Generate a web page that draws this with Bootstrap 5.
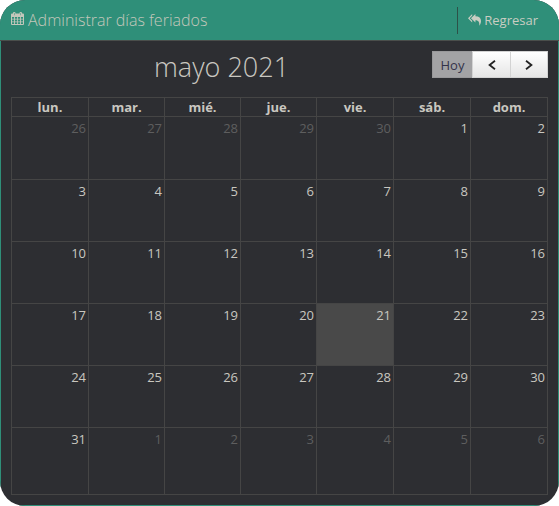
<!DOCTYPE html>
<html lang="es">
<head>
<meta charset="utf-8">
<meta name="viewport" content="width=device-width, initial-scale=1">
<title>Administrar días feriados</title>
<link href="https://cdn.jsdelivr.net/npm/bootstrap@5.3.0/dist/css/bootstrap.min.css" rel="stylesheet">
<style>
body{font-family:"Open Sans",sans-serif;font-size:13px;line-height:18px;color:#c9c7c0;background:#fff}
.frame{border-radius:25px}
.panel{height:506px;background:#2d2e32;border:1px solid #2f8f79;border-top:0}
.panel-top{height:41px;margin:0 -1px;padding:0 21px 0 11px;background:#2f8f79;border-bottom:1px solid #4a4e4b;color:#c3c7bb}
.cal-icon{margin-bottom:2px}
.panel-title{font-size:16px;font-weight:300;line-height:22px;margin:-1px 0 0 4px}
.back{height:27px;padding-left:10px;border-left:1px solid #2d5148;color:#c9cdc2}
.back svg{margin-right:3px}
.cal-head{height:56px;padding:10px 10px 0 153px}
.month{font-size:27px;font-weight:300;line-height:31px;color:#c9c7c0}
.cal-btn{height:27px;border:1px solid #d3d3d3;border-radius:0;padding:0;color:#222;background:linear-gradient(#fff,#e5e5e5);font-size:13px;line-height:18px;width:39px}
.cal-btn.today-btn{width:41px;background:#a3a3a5;border-color:#98989a;color:#33334a}
.cal-btn.next-btn{width:38px}
.cal-grid{display:grid;grid-template-columns:77px 76px 76px 76px 77px 77px 77px;grid-template-rows:19px 63px repeat(4,62px) 67px;width:537px;margin-left:10px;border:solid #454545;border-width:0 1px 1px 0}
.cal-grid>div{border:solid #454545;border-width:1px 0 0 1px;padding:2px 2px 0 0;text-align:right}
.cal-grid>.dow{padding:0;text-align:center;font-weight:700}
.cal-grid>.other{color:#5e5e5f}
.cal-grid>.today{background:#494949}
</style>
</head>
<body>
<div class="frame overflow-hidden">
<main class="panel">
<header class="panel-top d-flex align-items-center">
<svg width="13" height="14" viewBox="0 0 13 14" fill="currentColor" class="cal-icon flex-shrink-0" aria-hidden="true"><path fill-rule="evenodd" d="M1 1.600h1V1q0-1 1-1h.5q1 0 1 1v.6h4V1q0-1 1-1h.5q1 0 1 1v.6h1q1 0 1 1V12q0 1-1 1H1q-1 0-1-1V2.600q0-1 1-1zM3 1v2.300h.5V1zM9.500 1v2.300h.5V1zM1 5v1.800h2V5zm2.900 0v1.800h2.200V5zm3 0v1.800h2.200V5zM10 5v1.800h2V5zM1 7.600v1.900h2V7.600zm2.900 0v1.900h2.200V7.600zm3 0v1.900h2.200V7.600zm3.100 0v1.900h2V7.600zM1 10.300V12h2v-1.700zm2.900 0V12h2.200v-1.700zm3 0V12h2.200v-1.700zm3.100 0V12h2v-1.700z"/></svg>
<h1 class="panel-title">Administrar días feriados</h1>
<a href="#" class="back ms-auto d-flex align-items-center text-decoration-none"><svg width="13" height="12" viewBox="0 0 14 13" preserveAspectRatio="none" fill="currentColor" aria-hidden="true"><path d="M4.500 0v1.800L1.800 4.600l2.700 2.800v1.800L0 4.600z"/><path d="M8 0v2.500c4 .1 6 1.900 6 5 0 1.800-.7 3.700-1.800 5.300.3-3.800-.8-5.800-4.200-5.900v2.300L3.200 4.600z"/></svg><span>Regresar</span></a>
</header>
<div class="cal-head d-flex align-items-start justify-content-between">
<h2 class="month mb-0">mayo 2021</h2>
<div class="btn-group">
<button class="btn cal-btn today-btn">Hoy</button>
<button class="btn cal-btn" aria-label="Anterior"><svg class="d-block mx-auto" width="8" height="10" viewBox="0 0 8 10" fill="none" stroke="#222" stroke-width="1.8"><path d="M7 .8 1.600 5 7 9.200"/></svg></button>
<button class="btn cal-btn next-btn" aria-label="Siguiente"><svg class="d-block mx-auto" width="8" height="10" viewBox="0 0 8 10" fill="none" stroke="#222" stroke-width="1.8"><path d="M1 .8 6.400 5 1 9.200"/></svg></button>
</div>
</div>
<div class="cal-grid">
<div class="dow">lun.</div><div class="dow">mar.</div><div class="dow">mié.</div><div class="dow">jue.</div><div class="dow">vie.</div><div class="dow">sáb.</div><div class="dow">dom.</div>
<div class="other">26</div><div class="other">27</div><div class="other">28</div><div class="other">29</div><div class="other">30</div><div>1</div><div>2</div>
<div>3</div><div>4</div><div>5</div><div>6</div><div>7</div><div>8</div><div>9</div>
<div>10</div><div>11</div><div>12</div><div>13</div><div>14</div><div>15</div><div>16</div>
<div>17</div><div>18</div><div>19</div><div>20</div><div class="today">21</div><div>22</div><div>23</div>
<div>24</div><div>25</div><div>26</div><div>27</div><div>28</div><div>29</div><div>30</div>
<div>31</div><div class="other">1</div><div class="other">2</div><div class="other">3</div><div class="other">4</div><div class="other">5</div><div class="other">6</div>
</div>
</main>
</div>
<script src="https://cdn.jsdelivr.net/npm/bootstrap@5.3.0/dist/js/bootstrap.bundle.min.js"></script>
</body>
</html>
